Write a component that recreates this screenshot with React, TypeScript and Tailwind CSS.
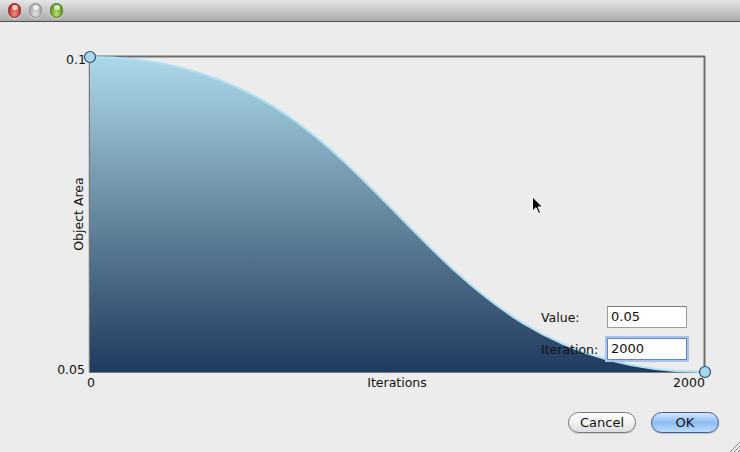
import React from "react";

const font = { fontFamily: '"DejaVu Sans", "Liberation Sans", sans-serif' };

function Light({ from, to, border }: { from: string; to: string; border: string }) {
  return (
    <div
      className="w-[13px] h-[15px] rounded-full relative"
      style={{
        background: `radial-gradient(ellipse at 50% 75%, ${to} 0%, ${from} 75%)`,
        border: `1px solid ${border}`,
        boxShadow: "0 1px 1px rgba(255,255,255,0.6)",
      }}
    >
      <div className="absolute left-[2.5px] top-[1px] w-[6px] h-[5px] rounded-full bg-white/70" />
    </div>
  );
}

export default function App() {
  return (
    <div className="w-[740px] h-[452px] bg-[#ececec] flex flex-col overflow-hidden relative" style={font}>
      {/* title bar */}
      <div className="h-[22px] shrink-0 flex items-center gap-[8px] pl-[8px] bg-gradient-to-b from-[#e6e6e6] to-[#aaaaaa] border-b border-[#505050]">
        <Light from="#c0322a" to="#f08a80" border="#8a2a24" />
        <Light from="#a9a9a9" to="#e2e2e2" border="#8c8c8c" />
        <Light from="#5e9a1e" to="#b8e070" border="#4c7a1c" />
      </div>

      {/* chart area */}
      <div className="relative h-[378px] shrink-0">
        <svg width="740" height="378" viewBox="0 22 740 378" className="block">
          <defs>
            <linearGradient id="fillg" gradientUnits="userSpaceOnUse" x1="0" y1="57" x2="0" y2="372">
              <stop offset="0" stopColor="#acd9ea" />
              <stop offset="0.5" stopColor="#66889f" />
              <stop offset="1" stopColor="#1f3a5f" />
            </linearGradient>
          </defs>
          {/* frame */}
          <line x1="90" y1="56.5" x2="705" y2="56.5" stroke="#6e6e6e" strokeWidth="2" />
          <line x1="704.5" y1="56" x2="704.5" y2="372" stroke="#6e6e6e" strokeWidth="2" />
          <line x1="89.5" y1="57" x2="89.5" y2="372" stroke="#7a7a7a" strokeWidth="1.5" />
          <line x1="89" y1="372.5" x2="705" y2="372.5" stroke="#7a7a7a" strokeWidth="1" />
          {/* filled curve */}
          <path d="M90 57 C397.5 57 397.5 372 705 372 L90 372 Z" fill="url(#fillg)" />
          <path d="M90 57 C397.5 57 397.5 372 705 372" fill="none" stroke="#ade0f0" strokeWidth="2" />
          {/* labels */}
          <g fontSize="12.5" fill="#111" style={font}>
            <text x="86" y="64" textAnchor="end">0.1</text>
            <text x="85" y="374" textAnchor="end">0.05</text>
            <text x="91" y="387" textAnchor="middle">0</text>
            <text x="397" y="387" textAnchor="middle">Iterations</text>
            <text x="689" y="387" textAnchor="middle">2000</text>
            <text x="83" y="214" textAnchor="middle" transform="rotate(-90 83 214)">Object Area</text>
          </g>
          {/* handles */}
          <circle cx="90" cy="57" r="5.5" fill="#a8d8ec" stroke="#2b4a6e" strokeWidth="1.2" />
          <circle cx="705" cy="372" r="5.5" fill="#a8d8ec" stroke="#2b4a6e" strokeWidth="1.2" />
        </svg>

        {/* value form overlay */}
        <div className="absolute left-[541px] top-[284px] grid grid-cols-[66px_80px] gap-y-[10px] items-center text-[12.5px] text-[#111]">
          <div className="pt-[2px]">Value:</div>
          <div className="h-[22px] bg-white border border-[#9c9c9c] border-t-[#7c7c7c] flex items-center pl-[3px] text-[13px]">0.05</div>
          <div className="pt-[2px]">Iteration:</div>
          <div className="h-[22px] bg-white border border-[#5b86c8] shadow-[0_0_0_2px_#a9c3ec] flex items-center pl-[3px] text-[13px]">2000</div>
        </div>

        {/* mouse cursor */}
        <svg className="absolute left-[531px] top-[174px]" width="13" height="19" viewBox="0 0 13 19">
          <path d="M1.5 1 L1.5 15 L5 11.6 L7.6 17.4 L9.6 16.5 L7.1 10.9 L11.6 10.9 Z" fill="#000" stroke="#fff" strokeWidth="1" strokeLinejoin="round" />
        </svg>
      </div>

      {/* buttons */}
      <div className="flex justify-end gap-[15px] pr-[21px] pt-[12px]">
        <button className="w-[68px] h-[21px] rounded-full border border-[#7a7a7a] bg-gradient-to-b from-[#ffffff] via-[#f2f2f2] to-[#dcdcdc] text-[13px] text-[#111] leading-none shadow-[0_1px_1px_rgba(0,0,0,0.15)]">
          Cancel
        </button>
        <button className="w-[68px] h-[21px] rounded-full border border-[#3f5f95] bg-gradient-to-b from-[#d3e6fc] via-[#8ebcf2] to-[#b9dcfb] text-[13px] text-[#111] leading-none shadow-[0_1px_1px_rgba(0,0,0,0.2)]">
          OK
        </button>
      </div>

      {/* resize grip */}
      <svg className="absolute right-0 bottom-0" width="12" height="12" viewBox="0 0 12 12">
        <line x1="2" y1="12" x2="12" y2="2" stroke="#8a8a8a" strokeWidth="1" />
        <line x1="6" y1="12" x2="12" y2="6" stroke="#8a8a8a" strokeWidth="1" />
        <line x1="10" y1="12" x2="12" y2="10" stroke="#8a8a8a" strokeWidth="1" />
      </svg>
    </div>
  );
}
